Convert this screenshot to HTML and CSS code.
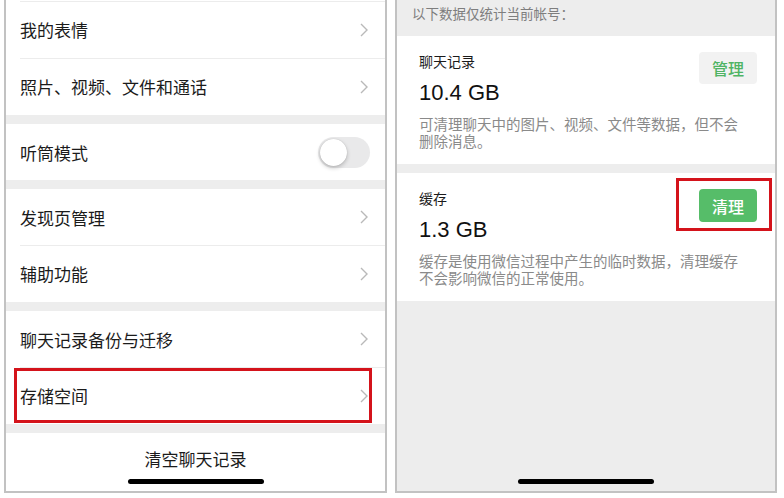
FILE: index.html
```html
<!DOCTYPE html>
<html lang="zh">
<head>
<meta charset="utf-8">
<link rel="stylesheet" href="styles.css">
</head>
<body>
<div class="screens">
  <div class="phone left">
    <div class="stub"></div>
    <div class="group">
      <div class="row sep"><span class="label">我的表情</span><svg class="chev" width="8" height="14" viewBox="0 0 8 14"><polyline points="1,1 7,7 1,13"/></svg></div>
      <div class="row sep"><span class="label">照片、视频、文件和通话</span><svg class="chev" width="8" height="14" viewBox="0 0 8 14"><polyline points="1,1 7,7 1,13"/></svg></div>
    </div>
    <div class="group">
      <div class="row"><span class="label">听筒模式</span><span class="toggle"><span class="knob"></span></span></div>
    </div>
    <div class="group">
      <div class="row"><span class="label">发现页管理</span><svg class="chev" width="8" height="14" viewBox="0 0 8 14"><polyline points="1,1 7,7 1,13"/></svg></div>
      <div class="row sep"><span class="label">辅助功能</span><svg class="chev" width="8" height="14" viewBox="0 0 8 14"><polyline points="1,1 7,7 1,13"/></svg></div>
    </div>
    <div class="group">
      <div class="row"><span class="label">聊天记录备份与迁移</span><svg class="chev" width="8" height="14" viewBox="0 0 8 14"><polyline points="1,1 7,7 1,13"/></svg></div>
      <div class="row sep"><span class="label">存储空间</span><svg class="chev" width="8" height="14" viewBox="0 0 8 14"><polyline points="1,1 7,7 1,13"/></svg><span class="mark mark-row"></span></div>
    </div>
    <div class="bottom">
      <span class="clear">清空聊天记录</span>
    </div>
    <span class="home"></span>
  </div>

  <div class="phone right">
    <div class="note">以下数据仅统计当前帐号：</div>
    <div class="card">
      <div class="title">聊天记录</div>
      <span class="btn btn-light">管理</span>
      <div class="amount">10.4 GB</div>
      <div class="desc">可清理聊天中的图片、视频、文件等数据，但不会删除消息。</div>
    </div>
    <div class="card">
      <div class="title">缓存</div>
      <span class="btn btn-green">清理</span>
      <div class="amount">1.3 GB</div>
      <div class="desc">缓存是使用微信过程中产生的临时数据，清理缓存不会影响微信的正常使用。</div>
      <span class="mark mark-btn"></span>
    </div>
    <span class="home"></span>
  </div>
</div>
</body>
</html>
```

FILE: styles.css
```css
* { box-sizing: border-box; }
html, body {
  margin: 0;
  padding: 0;
  background: #ffffff;
  font-family: "Liberation Sans", "Noto Sans CJK SC", sans-serif;
}
.screens {
  display: flex;
  gap: 8px;
  padding-left: 4px;
}
.phone {
  position: relative;
  height: 493px;
  border: 2px solid #c2c2c2;
  border-top: none;
  background: #ededed;
  overflow: hidden;
}
.left { width: 383px; }
.right { width: 382px; }

.stub { height: 1px; background: #fff; }
.group { background: #fff; margin-bottom: 9px; }
.row {
  position: relative;
  height: 56px;
  display: flex;
  align-items: center;
  justify-content: space-between;
  padding: 0 17px 0 14px;
  background: #fff;
}
.row.sep { height: 57px; }
.row.sep::before {
  content: "";
  position: absolute;
  top: 0;
  left: 14px;
  right: 0;
  height: 1px;
  background: #ececec;
}
.label {
  font-size: 17px;
  color: #1b1b1b;
}
.chev {
  fill: none;
  stroke: #b9b9b9;
  stroke-width: 1.4;
}
.toggle {
  position: relative;
  width: 52px;
  height: 31px;
  border-radius: 16px;
  background: #e9e9ea;
  margin-right: -2px;
}
.knob {
  position: absolute;
  left: 2px;
  top: 2px;
  width: 27px;
  height: 27px;
  border-radius: 50%;
  background: #fff;
  box-shadow: 0 2px 4px rgba(0,0,0,0.22), 0 0 1px rgba(0,0,0,0.2);
}
.bottom {
  background: #fff;
  height: 60px;
  display: flex;
  justify-content: center;
  padding-top: 17px;
}
.clear {
  font-size: 17px;
  color: #1b1b1b;
  line-height: 22px;
}
.home {
  position: absolute;
  left: 50%;
  bottom: 7px;
  width: 136px;
  height: 5px;
  margin-left: -68px;
  border-radius: 3px;
  background: #000;
}
.mark {
  position: absolute;
  border: 3px solid #d4131b;
}
.mark-row {
  left: 8px;
  top: 1px;
  width: 358px;
  height: 55px;
}

.note {
  height: 36px;
  padding: 6px 0 0 15px;
  font-size: 13.5px;
  line-height: 18px;
  color: #7e7e7e;
}
.card {
  position: relative;
  display: grid;
  grid-template-columns: 1fr 58px;
  grid-template-rows: 20px auto auto;
  align-items: start;
  align-content: start;
  height: 128px;
  margin-bottom: 9px;
  padding: 16px 18px 0 22px;
  background: #fff;
}
.title {
  grid-column: 1;
  grid-row: 1;
  font-size: 14px;
  line-height: 20px;
  color: #1b1b1b;
}
.amount {
  grid-column: 1;
  grid-row: 2;
  margin-top: 7px;
  font-size: 22px;
  line-height: 28px;
  color: #111;
}
.desc {
  grid-column: 1 / -1;
  grid-row: 3;
  margin-top: 10px;
  max-width: 326px;
  font-size: 14.5px;
  line-height: 17px;
  color: #8a8a8a;
}
.btn {
  grid-column: 2;
  grid-row: 1 / span 2;
  width: 58px;
  height: 32px;
  border-radius: 4px;
  display: flex;
  align-items: center;
  justify-content: center;
  font-size: 16px;
  font-weight: 500;
}
.btn-light { background: #f2f2f2; color: #4fb464; }
.btn-green { background: #56bd69; color: #fff; height: 33px; }
.mark-btn {
  left: 279px;
  top: 5px;
  width: 96px;
  height: 53px;
}
```
